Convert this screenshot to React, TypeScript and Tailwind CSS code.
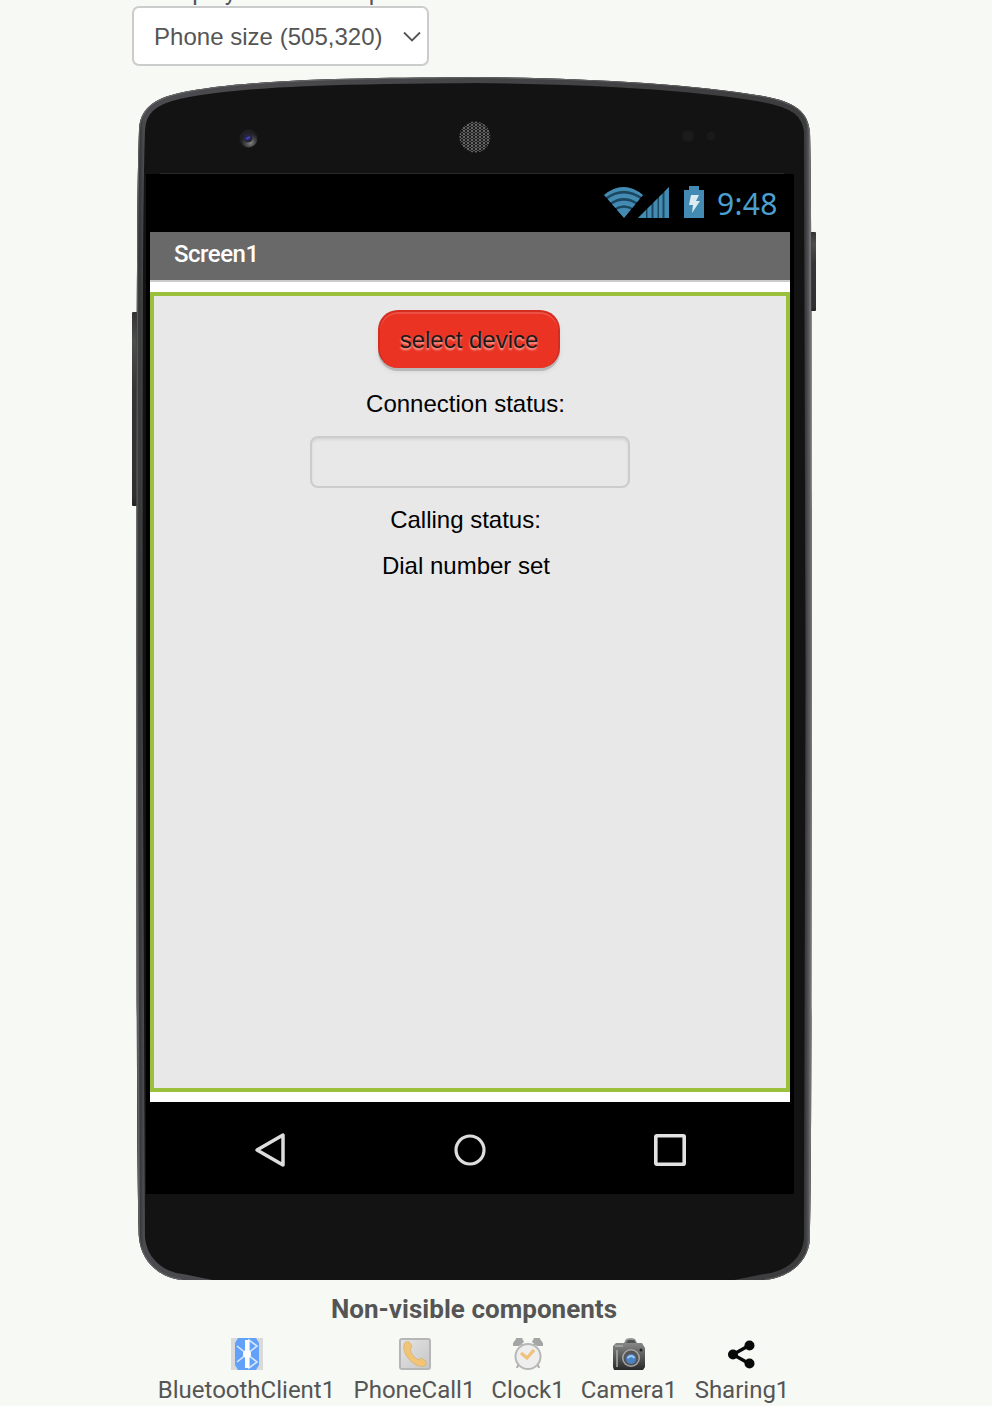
import React from "react";

function PhoneBody() {
  const outline =
    "M7 56 C8 35 21 25 47 19 C118 4 240 4 343 3 C446 4 555 9 631 22 C664 28 676 38 678 58 C679.500 120 679.500 180 679.500 600 C679.500 960 679.500 1100 678 1164 C677 1187 659 1203 633 1206 L50 1206 C24 1203 9 1185 7 1164 C5 1100 4.500 960 4.500 600 C4.500 180 5 120 7 56 Z";
  return (
    <svg className="absolute inset-0 h-[1206px] w-[684px]" viewBox="0 0 684 1206" aria-hidden="true">
      <defs>
        <linearGradient id="rim" x1="0" x2="684" y1="0" y2="0" gradientUnits="userSpaceOnUse">
          <stop offset="0" stopColor="#4a4a4c" />
          <stop offset=".012" stopColor="#38383a" />
          <stop offset=".017" stopColor="#4b4b4f" />
          <stop offset=".5" stopColor="#454547" />
          <stop offset=".985" stopColor="#3c3c3e" />
          <stop offset=".99" stopColor="#5c5c60" />
          <stop offset="1" stopColor="#4a4a4c" />
        </linearGradient>
        <pattern id="mesh" width="4" height="6" patternUnits="userSpaceOnUse">
          <path d="M0 0q3 1.500 0 3q3 1.500 0 3M4 0q-3 1.500 0 3q-3 1.500 0 3" stroke="#777" strokeWidth=".8" fill="none" />
        </pattern>
        <linearGradient id="key" x1="0" x2="0" y1="0" y2="1">
          <stop offset="0" stopColor="#333" />
          <stop offset=".15" stopColor="#4d4f4c" />
          <stop offset=".4" stopColor="#353535" />
          <stop offset=".95" stopColor="#303030" />
          <stop offset="1" stopColor="#222" />
        </linearGradient>
        <radialGradient id="lens" cx=".6" cy=".72">
          <stop offset="0" stopColor="#888" />
          <stop offset=".5" stopColor="#4b4b4d" />
          <stop offset="1" stopColor="#202022" />
        </radialGradient>
        <clipPath id="body"><path d={outline} /></clipPath>
      </defs>
      <rect x="0" y="238" width="7" height="194" rx="1" fill="url(#key)" />
      <rect x="677" y="158" width="7" height="79" rx="1" fill="url(#key)" />
      <path d={outline} fill="#131313" />
      <g clipPath="url(#body)">
        <path
          d="M80 1212 L50 1206 C24 1203 9 1185 7 1164 C5 1100 4.500 960 4.500 600 C4.500 180 5 120 7 56 C8 35 21 25 47 19 C118 4 240 4 343 3 C446 4 555 9 631 22 C664 28 676 38 678 58 C679.500 120 679.500 180 679.500 600 C679.500 960 679.500 1100 678 1164 C677 1187 659 1203 633 1206 L603 1212"
          fill="none"
          stroke="url(#rim)"
          strokeWidth="12"
        />
        <path
          d="M50 1206 C24 1203 9 1185 7 1164 C5 1100 4.500 960 4.500 600 C4.500 180 5 120 7 56 C8 35 21 25 47 19 C118 4 240 4 343 3 C446 4 555 9 631 22 C664 28 676 38 678 58 C679.500 120 679.500 180 679.500 600 C679.500 960 679.500 1100 678 1164 C677 1187 659 1203 633 1206"
          fill="none"
          stroke="#858587"
          strokeWidth="2"
          opacity=".5"
        />
      </g>
      <path d="M28 99.500H652" stroke="#292929" />
      <circle cx="116.500" cy="64.500" r="9" fill="url(#lens)" />
      <circle cx="116" cy="64" r="4.500" fill="#252540" />
      <path d="M114 65l4-2" stroke="#4141b8" strokeWidth="2.500" />
      <circle cx="343" cy="63" r="15" fill="#1e1e1e" />
      <circle cx="343" cy="63" r="15.500" fill="url(#mesh)" />
      <circle cx="556" cy="62" r="6" fill="#1d1a1a" />
      <circle cx="579" cy="62" r="4.500" fill="#1a1919" />
    </svg>
  );
}

function StatusIcons() {
  return (
    <svg className="h-[34px] w-[102px]" viewBox="0 0 102 34" aria-hidden="true">
      <defs>
        <clipPath id="fan"><path d="M0 9Q19.500-7 39 9L20 32Z" /></clipPath>
      </defs>
      <g clipPath="url(#fan)">
        <path d="M0 9Q19.500-7 39 9L20 32Z" fill="#1b4860" />
        <g fill="none" stroke="#438bb3" strokeWidth="4.600">
          <path d="M0 10Q19.500-5 40 10M4 15.500Q19.500 4 36 15.500M8 21Q20 13 32 21" />
          <path d="M10 26Q20 18.500 30 26L20 34Z" fill="#438bb3" strokeWidth="1" />
        </g>
      </g>
      <path d="M34 32L65 1V32Z" fill="#1b4860" />
      <path d="M34 32l8-8v8zM43.500 32V22.500l4-4V32zM49.500 32V16.500l4-4V32zM55 32V11l3.500-3.500V32zM60.500 32V5.500L65 1v31z" fill="#438bb3" />
      <path d="M80 4h5V0h10v4h5v28H80z" fill="#438bb3" />
      <path d="M87 9h8l-3 6h4L88 27l1-8h-4z" fill="#dcebf1" />
    </svg>
  );
}

function BluetoothIcon() {
  return (
    <svg width="32" height="32" viewBox="0 0 32 32">
      <path fill="#dadada" d="M0 0h32v32H0z" />
      <path fill="#62a1f7" d="M7 0h18l3 5v22l-3 5H7l-3-5V5z" />
      <path d="M6 8l20 16-8 6V2l8 6L6 24" fill="none" stroke="#d9e8ff" strokeWidth="1.600" />
      <path d="M14 2h4v28h-4z" fill="#fff" />
      <circle cx="16" cy="16" r="4" fill="#fff" />
    </svg>
  );
}

function PhoneIcon() {
  return (
    <svg width="32" height="32" viewBox="0 0 32 32">
      <defs>
        <linearGradient id="callbg" x2="1" y2="1">
          <stop stopColor="#e4e4e4" />
          <stop offset="1" stopColor="#c6c6c6" />
        </linearGradient>
      </defs>
      <rect x="1" y="1" width="30" height="30" rx="2" fill="url(#callbg)" stroke="#b6b6b6" strokeWidth="2" />
      <path d="M5 7C5 4 8 3 10 4L13 8 11 12C12 16 16 20 19 22L22 20 27 23V27C22 31 14 26 9 20 6 16 4 11 5 7Z" fill="#f2c474" stroke="#d6b880" strokeWidth="1" />
    </svg>
  );
}

function ClockIcon() {
  return (
    <svg width="32" height="32" viewBox="0 0 32 32">
      <path d="M1 5L4 1V0h6l2 4-5 4H1zM31 5l-3-4V0h-6l-2 4 5 4h6z" fill="#a5a5a5" />
      <path d="M8 5l4 4M24 5l-4 4M6 27l-1 3M26 27l1 3" stroke="#ababab" strokeWidth="2" />
      <circle cx="16" cy="18.500" r="12.500" fill="#eee" stroke="#b7b7b7" strokeWidth="2" />
      <path d="M9 15l6 5 7-8" fill="none" stroke="#f1c27a" strokeWidth="3.400" />
    </svg>
  );
}

function CameraIcon() {
  return (
    <svg width="32" height="32" viewBox="0 0 32 32">
      <defs>
        <linearGradient id="cambody" x2="0" y2="1">
          <stop stopColor="#999" />
          <stop offset=".4" stopColor="#6c6c6c" />
          <stop offset="1" stopColor="#292929" />
        </linearGradient>
      </defs>
      <path d="M0 8l3-3h8l2-4q5-2 9 0l2 4h5l3 5v19l-2 3H1l-1-3z" fill="url(#cambody)" />
      <path d="M13 5l2-3h6l2 3z" fill="#555" />
      <path d="M2 8h8M4 12v17" stroke="#aaa" strokeWidth="1.500" />
      <circle cx="18" cy="20" r="9" fill="#a4a4a4" />
      <circle cx="18" cy="20" r="7.500" fill="#555" />
      <circle cx="18" cy="21" r="5" fill="#4b83c7" />
      <path d="M14.500 20q4-4 7 0" stroke="#9dc8f4" strokeWidth="2" fill="none" />
      <circle cx="28" cy="12" r="1.500" fill="#222" />
    </svg>
  );
}

function ShareIcon() {
  return (
    <svg width="32" height="32" viewBox="0 0 32 32">
      <path d="M23 7.500L7 16.500l16 9" fill="none" stroke="#080808" strokeWidth="3.400" />
      <g fill="#080808"><circle cx="7" cy="16.500" r="5" /><circle cx="23.500" cy="7.500" r="5" /><circle cx="23.500" cy="25.500" r="5" /></g>
    </svg>
  );
}

const components = [
  { name: "BluetoothClient1", Icon: BluetoothIcon, width: "w-[179px]" },
  { name: "PhoneCall1", Icon: PhoneIcon, width: "w-[121px]" },
  { name: "Clock1", Icon: ClockIcon, width: "w-[70px]" },
  { name: "Camera1", Icon: CameraIcon, width: "w-[96px]" },
  { name: "Sharing1", Icon: ShareIcon, width: "w-[94px]" },
];

export default function App() {
  return (
    <main className="h-[1406px] w-[992px] overflow-hidden bg-[#f7f9f4] pl-[132px] font-['Roboto',sans-serif] text-[24px] text-[#555]">
      <div className="flex h-[6px] items-end overflow-hidden pl-[26px]">
        <span className="leading-[28px] tracking-[0.1px] whitespace-nowrap">Display hidden components in Viewer</span>
      </div>
      <button className="flex h-[60px] w-[297px] items-center justify-between rounded-[7px] border-2 border-[#ccc] bg-white pr-[6px] pl-5 font-['Liberation_Sans',sans-serif]">
        <span className="pt-[2px] tracking-[0.02px] whitespace-nowrap">Phone size (505,320)</span>
        <svg className="mt-[2px]" width="18" height="12" viewBox="0 0 18 12" fill="none" stroke="#555" strokeWidth="1.800"><path d="M1 1.500l8 8 8-8" /></svg>
      </button>

      <div className="relative mt-2 h-[1206px] w-[684px] pt-[100px] pl-[14px]">
        <PhoneBody />
        <div className="relative flex h-[1020px] w-[648px] flex-col bg-black">
          <div className="flex h-[58px] shrink-0 items-start justify-end pt-[12px] pr-[16px]">
            <StatusIcons />
            <span className="ml-[11px] w-[61px] font-['Noto_Sans',sans-serif] text-[30px] leading-[36px] tracking-[0.3px] whitespace-nowrap text-[#4ba0cf]">9:48</span>
          </div>
          <section className="mx-1 flex h-[870px] shrink-0 flex-col bg-white">
            <h1 className="h-[50px] border-b-2 border-[#ccc] bg-[#696969] pl-6 text-[24px] leading-[44px] font-medium tracking-[-0.5px] text-white">Screen1</h1>
            <div className="mt-[10px] flex h-[800px] flex-col items-center border-4 border-[#9bc13c] bg-[#e8e8e8] pt-[14px] font-['Liberation_Sans',sans-serif] text-black">
              <button className="mr-[2px] h-[58px] w-[182px] rounded-[20px] border-2 border-b-0 border-[#d52c20] bg-[#eb3323] text-[#1a1a1a] [box-shadow:inset_0_2px_0_#ed5145,0_3px_0_#b8b8b8,0_4px_5px_#0001] [text-shadow:0_2px_2px_#fff9]">select device</button>
              <p className="mt-[22px] mr-[9px] leading-7">Connection status:</p>
              <input aria-label="Connection status" className="mt-[18px] h-[52px] w-[320px] rounded-[8px] border-2 border-[#ccc] bg-transparent [box-shadow:inset_0_2px_3px_#00000013]" />
              <p className="mt-[18px] mr-[9px] leading-7">Calling status:</p>
              <p className="mt-[18px] mr-[8px] leading-7">Dial number set</p>
            </div>
          </section>
          <nav className="flex h-[92px] items-center justify-between px-[108px] pt-[4px]">
            <svg width="32" height="36" viewBox="0 0 32 36"><path d="M3 18L29 3V33Z" fill="none" stroke="#ddd" strokeWidth="3.500" strokeLinejoin="round" /></svg>
            <svg width="32" height="32" viewBox="0 0 32 32"><circle cx="16" cy="16" r="14" fill="none" stroke="#ddd" strokeWidth="3.200" /></svg>
            <svg width="32" height="32" viewBox="0 0 32 32"><rect x="1.800" y="1.800" width="28.400" height="28.400" rx="1" fill="none" stroke="#e2e2e2" strokeWidth="3.600" /></svg>
          </nav>
        </div>
      </div>

      <h2 className="mt-[15px] w-[684px] text-center text-[26px] leading-7 font-bold tracking-[0.03px]">Non-visible components</h2>
      <div className="mt-[15px] ml-[25px] flex gap-[18px]">
        {components.map(({ name, Icon, width }) => (
          <div key={name} className={`${width} flex flex-col items-center`}>
            <Icon />
            <span className="mt-[6px] leading-7 whitespace-nowrap">{name}</span>
          </div>
        ))}
      </div>
    </main>
  );
}
